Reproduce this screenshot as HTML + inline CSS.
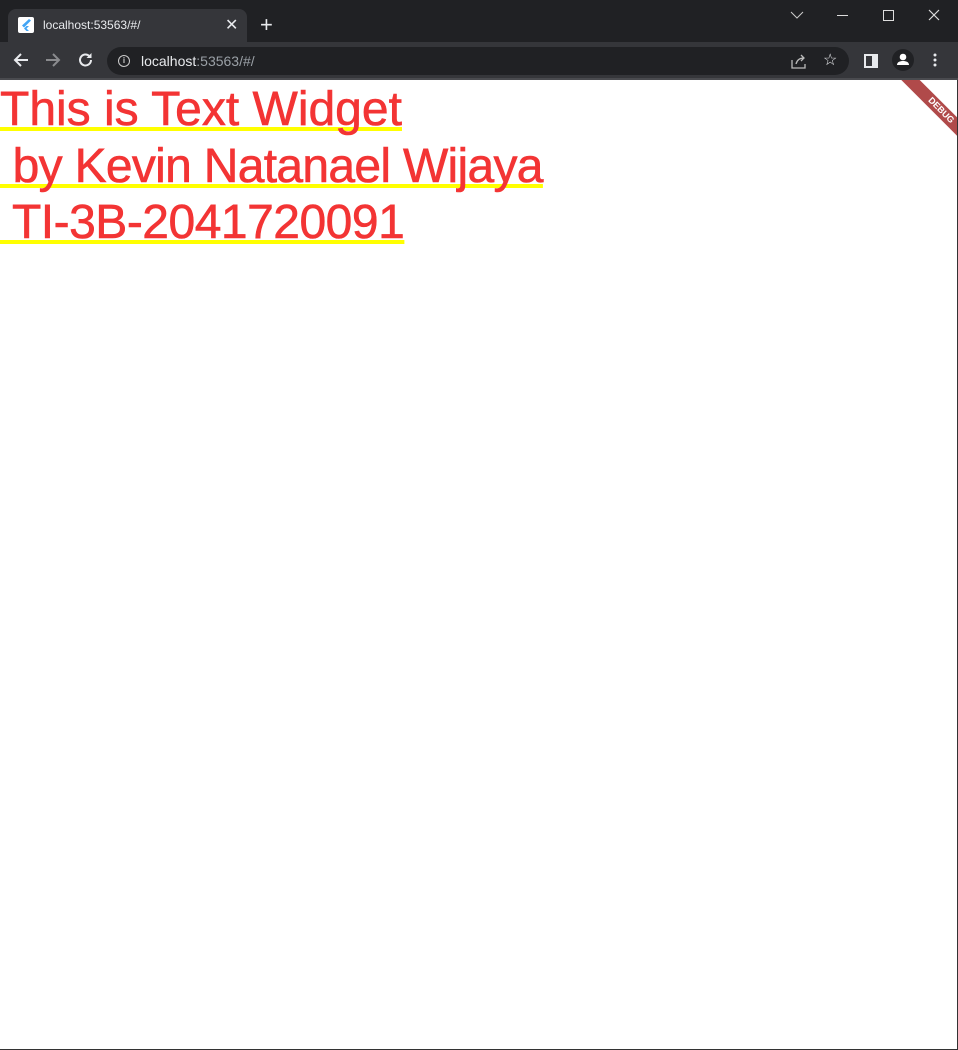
<!DOCTYPE html>
<html><head><style>
body{margin:0;width:958px;height:1050px;overflow:hidden;background:#fff;font-family:"Liberation Sans",sans-serif;position:relative}
.top{position:absolute;left:0;top:0;width:958px;height:42px;background:#202124}
.tab{position:absolute;left:8px;top:9px;width:239px;height:34px;background:#35363a;border-radius:8px 8px 0 0}
.tb{position:absolute;left:0;top:42px;width:958px;height:36px;background:#35363a}
.omni{position:absolute;left:107px;top:5px;width:742px;height:28px;border-radius:14px;background:#202124}
.c{position:absolute;color:#e8eaed;font-size:12px}
.txt{position:absolute;left:0;top:80px;padding-top:2px;color:#f33434;font-size:48px;line-height:56.5px;white-space:pre;text-decoration:underline;text-decoration-color:#ffff00;text-decoration-thickness:4px;text-underline-offset:2px;text-decoration-skip-ink:none;-webkit-text-stroke:0.6px #f33434}
.txt div{text-decoration:inherit}
.rb{position:absolute;right:0;top:80px;width:1px;height:970px;background:#333}
.bb{position:absolute;left:0;top:1049px;width:958px;height:1px;background:#333}
</style></head><body>
<div class="top"><div class="tab">
<div style="position:absolute;left:10px;top:8px;width:16px;height:16px;background:#fff;border-radius:2px"><svg width="16" height="16"><path d="M11 2L4 8.5l2 2L13 3.5z M8.5 9L6 11.5l2.5 2.5H11L8.5 11.5 11 9z" fill="#42a5f5"/></svg></div>
<span class="c" style="left:35px;top:9px">localhost:53563/#/</span>
<span class="c" style="left:217px;top:6px;font-size:16px">✕</span></div>
<span class="c" style="left:260px;top:14px;font-size:22px;line-height:22px">+</span>
<svg style="position:absolute;left:790px;top:10px" width="14" height="10"><path d="M1 2l6 6 6-6" stroke="#ccc" fill="none"/></svg>
<div style="position:absolute;left:837px;top:15px;width:11px;height:1px;background:#ddd"></div>
<div style="position:absolute;left:883px;top:10px;width:9px;height:9px;border:1px solid #ddd"></div>
<svg style="position:absolute;left:928px;top:9px" width="12" height="12"><path d="M1 1l10 10M11 1L1 11" stroke="#ddd" stroke-width="1.2"/></svg>
</div>
<div class="tb">
<svg style="position:absolute;left:12px;top:10px" width="18" height="16"><path d="M16 8H3M9 2L3 8l6 6" stroke="#e8eaed" stroke-width="2" fill="none"/></svg>
<svg style="position:absolute;left:44px;top:10px" width="18" height="16"><path d="M2 8h13M9 2l6 6-6 6" stroke="#8a8b8e" stroke-width="2" fill="none"/></svg>
<svg style="position:absolute;left:77px;top:9px" width="18" height="18"><path d="M14 9a5.5 5.5 0 1 1-1.6-3.9" stroke="#e8eaed" stroke-width="2" fill="none"/><path d="M14.5 2v5h-5z" fill="#e8eaed"/></svg>
<div class="omni">
<div style="position:absolute;left:11px;top:8px;width:10px;height:10px;border:1.5px solid #ccc;border-radius:50%;color:#ccc;font-size:8px;text-align:center;line-height:10px;font-weight:bold">i</div>
<span class="c" style="left:34px;top:6px;font-size:14px">localhost<span style="color:#9aa0a6">:53563/#/</span></span>
<svg style="position:absolute;left:684px;top:7px" width="16" height="15"><path d="M1 6v8h13v-4M5 10c1-4 4-6 8-6M10 1l3 3-3 3" stroke="#bbb" stroke-width="1.3" fill="none"/></svg>
<span class="c" style="left:716px;top:3px;font-size:16px">☆</span>
</div>
<div style="position:absolute;left:864px;top:12px;width:10px;height:10px;border:2px solid #e8eaed;background:linear-gradient(90deg,#35363a 60%,#e8eaed 60%)"></div>
<div style="position:absolute;left:892px;top:7px;width:22px;height:22px;border-radius:50%;background:#202124"><svg width="22" height="22"><circle cx="11" cy="8" r="3.3" fill="#fff"/><path d="M5 16c0-3 3-4 6-4s6 1 6 4z" fill="#fff"/></svg></div>
<svg style="position:absolute;left:933px;top:11px" width="4" height="16"><circle cx="2" cy="2" r="1.5" fill="#e8eaed"/><circle cx="2" cy="7" r="1.5" fill="#e8eaed"/><circle cx="2" cy="12" r="1.5" fill="#e8eaed"/></svg>
</div>
<div style="position:absolute;left:0;top:78px;width:958px;height:2px;background:#4a4b4f"></div>
<div class="txt"><div>This is Text Widget</div><div style="letter-spacing:-0.7px"> by Kevin Natanael Wijaya</div><div style="letter-spacing:-0.5px"> TI-3B-2041720091</div></div>
<div style="position:absolute;left:858px;top:80px;width:100px;height:100px;overflow:hidden"><div style="position:absolute;left:28px;top:24px;width:110px;height:13px;background:#b04a4a;transform:rotate(45deg);color:#fff;font-size:9px;font-weight:bold;text-align:center;line-height:13px">DEBUG</div></div>
<div class="rb"></div><div class="bb"></div>
</body></html>
